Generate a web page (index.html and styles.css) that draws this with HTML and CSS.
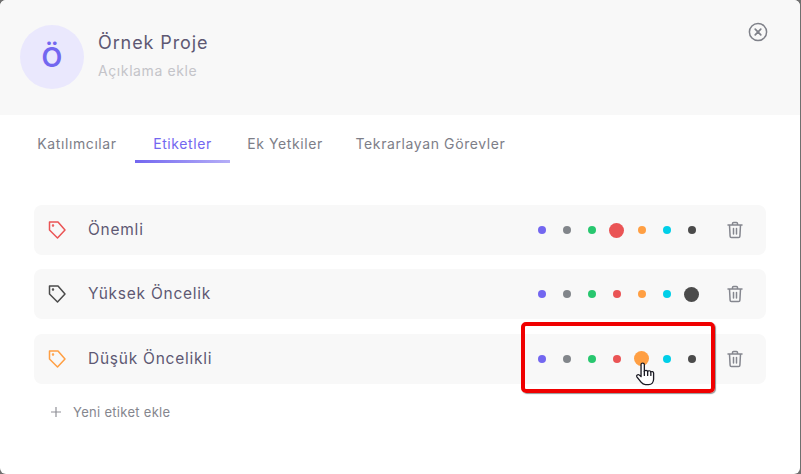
FILE: index.html
```html
<!DOCTYPE html>
<html lang="tr">
  <head>
    <meta charset="UTF-8" />
    <meta name="viewport" content="width=device-width, initial-scale=1.0" />
    <title>Örnek Proje</title>
    <link rel="stylesheet" href="styles.css">
  </head>
  <body>
    <div class="modal">
      <div class="modal-head">
        <div class="avatar">Ö</div>
        <div class="head-text">
          <div class="project-name">Örnek Proje</div>
          <div class="project-desc">Açıklama ekle</div>
        </div>
        <svg class="close-icon" width="20" height="20" viewBox="0 0 20 20" fill="none" stroke="#7f8189" stroke-width="1.5" stroke-linecap="round">
          <circle cx="10" cy="10" r="8.6" />
          <path d="M7.2 7.2l5.6 5.6M12.8 7.2l-5.6 5.6" stroke-width="1.7" />
        </svg>
      </div>

      <div class="tabs">
        <div class="tab tab-members">Katılımcılar</div>
        <div class="tab tab-labels active">Etiketler</div>
        <div class="tab tab-perms">Ek Yetkiler</div>
        <div class="tab tab-repeat">Tekrarlayan Görevler</div>
      </div>

      <div class="tag-list">
        <div class="tag-row">
          <svg class="tag-icon" width="20" height="20" viewBox="0 0 20 20" fill="none" stroke="#ea5455" stroke-width="1.5" stroke-linejoin="round">
            <path d="M2.5 2H11L18 10L10.5 18L2.5 10Z" />
            <circle cx="6" cy="5.5" r=".5" />
          </svg>
          <span class="tag-name">Önemli</span>
          <div class="colors">
            <span class="dot purple"></span>
            <span class="dot gray"></span>
            <span class="dot green"></span>
            <span class="dot red big"></span>
            <span class="dot orange"></span>
            <span class="dot cyan"></span>
            <span class="dot dark"></span>
          </div>
          <svg class="trash-icon" width="20" height="20" viewBox="0 0 20 20" fill="none" stroke="#85878f" stroke-width="1.5" stroke-linecap="round" stroke-linejoin="round">
            <path d="M3 5h14M7.5 5V3.6C7.5 3 8 2.5 8.6 2.5h2.8c.6 0 1.1.5 1.1 1.1V5M4.5 5l.6 11.2c0 .8.7 1.4 1.4 1.4h7c.7 0 1.4-.6 1.4-1.4L15.5 5M8.5 8.5v5.5M11.5 8.5v5.5" />
          </svg>
        </div>

        <div class="tag-row">
          <svg class="tag-icon" width="20" height="20" viewBox="0 0 20 20" fill="none" stroke="#4b4b4b" stroke-width="1.5" stroke-linejoin="round">
            <path d="M2.5 2H11L18 10L10.5 18L2.5 10Z" />
            <circle cx="6" cy="5.5" r=".5" />
          </svg>
          <span class="tag-name">Yüksek Öncelik</span>
          <div class="colors">
            <span class="dot purple"></span>
            <span class="dot gray"></span>
            <span class="dot green"></span>
            <span class="dot red"></span>
            <span class="dot orange"></span>
            <span class="dot cyan"></span>
            <span class="dot dark big"></span>
          </div>
          <svg class="trash-icon" width="20" height="20" viewBox="0 0 20 20" fill="none" stroke="#85878f" stroke-width="1.5" stroke-linecap="round" stroke-linejoin="round">
            <path d="M3 5h14M7.5 5V3.6C7.5 3 8 2.5 8.6 2.5h2.8c.6 0 1.1.5 1.1 1.1V5M4.5 5l.6 11.2c0 .8.7 1.4 1.4 1.4h7c.7 0 1.4-.6 1.4-1.4L15.5 5M8.5 8.5v5.5M11.5 8.5v5.5" />
          </svg>
        </div>

        <div class="tag-row">
          <svg class="tag-icon" width="20" height="20" viewBox="0 0 20 20" fill="none" stroke="#ff9f43" stroke-width="1.5" stroke-linejoin="round">
            <path d="M2.5 2H11L18 10L10.5 18L2.5 10Z" />
            <circle cx="6" cy="5.5" r=".5" />
          </svg>
          <span class="tag-name">Düşük Öncelikli</span>
          <div class="colors">
            <span class="dot purple"></span>
            <span class="dot gray"></span>
            <span class="dot green"></span>
            <span class="dot red"></span>
            <span class="dot orange big"></span>
            <span class="dot cyan"></span>
            <span class="dot dark"></span>
          </div>
          <svg class="trash-icon" width="20" height="20" viewBox="0 0 20 20" fill="none" stroke="#85878f" stroke-width="1.5" stroke-linecap="round" stroke-linejoin="round">
            <path d="M3 5h14M7.5 5V3.6C7.5 3 8 2.5 8.6 2.5h2.8c.6 0 1.1.5 1.1 1.1V5M4.5 5l.6 11.2c0 .8.7 1.4 1.4 1.4h7c.7 0 1.4-.6 1.4-1.4L15.5 5M8.5 8.5v5.5M11.5 8.5v5.5" />
          </svg>
        </div>
      </div>

      <div class="add-tag">
        <svg width="12" height="12" viewBox="0 0 12 12" fill="none" stroke="#8f9097" stroke-width="1.2">
          <path d="M6 1v10M1 6h10" />
        </svg>
        <span>Yeni etiket ekle</span>
      </div>
    </div>

    <!-- annotation and mouse pointer on top of the screenshot -->
    <div class="highlight"></div>
    <svg class="pointer" width="22" height="25" viewBox="0 0 20 26" preserveAspectRatio="none" fill="#fff" stroke="#1b1b24" stroke-width="1.2" stroke-linejoin="round" stroke-linecap="round">
      <path d="M5.5 2.6c0-2 3-2 3 0v7.2c.2-1.5 2.9-1.5 3 .2.3-1.3 2.7-1.2 2.9.5.5-1 2.5-.7 2.5 1v6.5c0 3-1.8 5.5-4.5 5.500H9.5c-1.8 0-3-1-4-2.5L1.700 15.400c-.9-1.5 1-3 2.3-1.700l1.500 1.600z" />
      <path d="M8.500 9.800v4.200M11.500 10v4M14.400 10.800v3.200" fill="none" />
    </svg>
  </body>
</html>
```

FILE: styles.css
```css
* {
  margin: 0;
  padding: 0;
  box-sizing: border-box;
}
body {
  width: 801px;
  height: 474px;
  overflow: hidden;
  background-color: #6f6f6f;
  font-family: "Inter", "Liberation Sans", sans-serif;
}
.modal {
  width: 800px;
  height: 474px;
  border-radius: 6px;
  overflow: hidden;
  background-color: #fff;
}
.modal-head {
  display: flex;
  align-items: flex-start;
  height: 115px;
  padding: 25px 32px 0 20px;
  background-color: #f8f8f8;
}
.avatar {
  display: flex;
  align-items: center;
  justify-content: center;
  width: 64px;
  height: 64px;
  border-radius: 50%;
  background-color: #eae8fd;
  color: #7367f0;
  font-size: 27px;
  font-weight: 600;
}
.head-text {
  flex: 1;
  margin-left: 14px;
  padding-top: 7px;
}
.project-name {
  font-size: 18px;
  line-height: 22px;
  letter-spacing: .9px;
  color: #5e5873;
}
.project-desc {
  margin-top: 8px;
  font-size: 14px;
  line-height: 18px;
  letter-spacing: .6px;
  color: #c4c4c9;
}
.close-icon {
  margin-top: -3px;
}
.tabs {
  display: flex;
  margin-top: 14px;
  padding-left: 19px;
}
.tab {
  height: 34px;
  padding-top: 6px;
  text-align: center;
  font-size: 14px;
  line-height: 17px;
  letter-spacing: .6px;
  color: #7d7e88;
}
.tab-members { width: 116px; }
.tab-labels { width: 95px; }
.tab-perms { width: 110px; }
.tab-repeat { width: 181px; }
.tab.active {
  position: relative;
  color: #7367f0;
}
.tab.active::after {
  content: "";
  position: absolute;
  left: 0;
  right: 0;
  bottom: 0;
  height: 3px;
  background: linear-gradient(90deg, #7367f0, #b5aef7);
}
.tag-list {
  display: flex;
  flex-direction: column;
  gap: 14.4px;
  margin: 42px 34px 0;
}
.tag-row {
  display: flex;
  align-items: center;
  height: 50px;
  padding: 0 21px 0 13px;
  border-radius: 8px;
  background-color: #f8f8f8;
}
.tag-name {
  flex: 1;
  margin-left: 21px;
  padding-bottom: 1px;
  font-size: 15.5px;
  letter-spacing: .75px;
  color: #5e5873;
}
.colors {
  display: flex;
  align-items: center;
  margin-right: 21px;
}
.dot {
  width: 8px;
  height: 8px;
  margin: 0 8.5px;
  border-radius: 50%;
}
.dot.big {
  width: 15px;
  height: 15px;
  margin: 0 5px;
}
.purple { background-color: #7367f0; }
.gray { background-color: #82868b; }
.green { background-color: #28c76f; }
.red { background-color: #ea5455; }
.orange { background-color: #ff9f43; }
.cyan { background-color: #00cfe8; }
.dark { background-color: #4b4b4b; }
.add-tag {
  display: flex;
  align-items: center;
  gap: 11px;
  margin: 19px 0 0 50px;
  font-size: 13px;
  line-height: 18px;
  letter-spacing: .3px;
  color: #85868e;
}
.highlight {
  position: absolute;
  left: 521px;
  top: 322px;
  width: 194px;
  height: 71px;
  border: 4px solid #f00000;
  border-radius: 5px;
  box-shadow: 1px 1px 1px rgba(60, 60, 60, .55);
}
.pointer {
  position: absolute;
  left: 635px;
  top: 362px;
}
```
